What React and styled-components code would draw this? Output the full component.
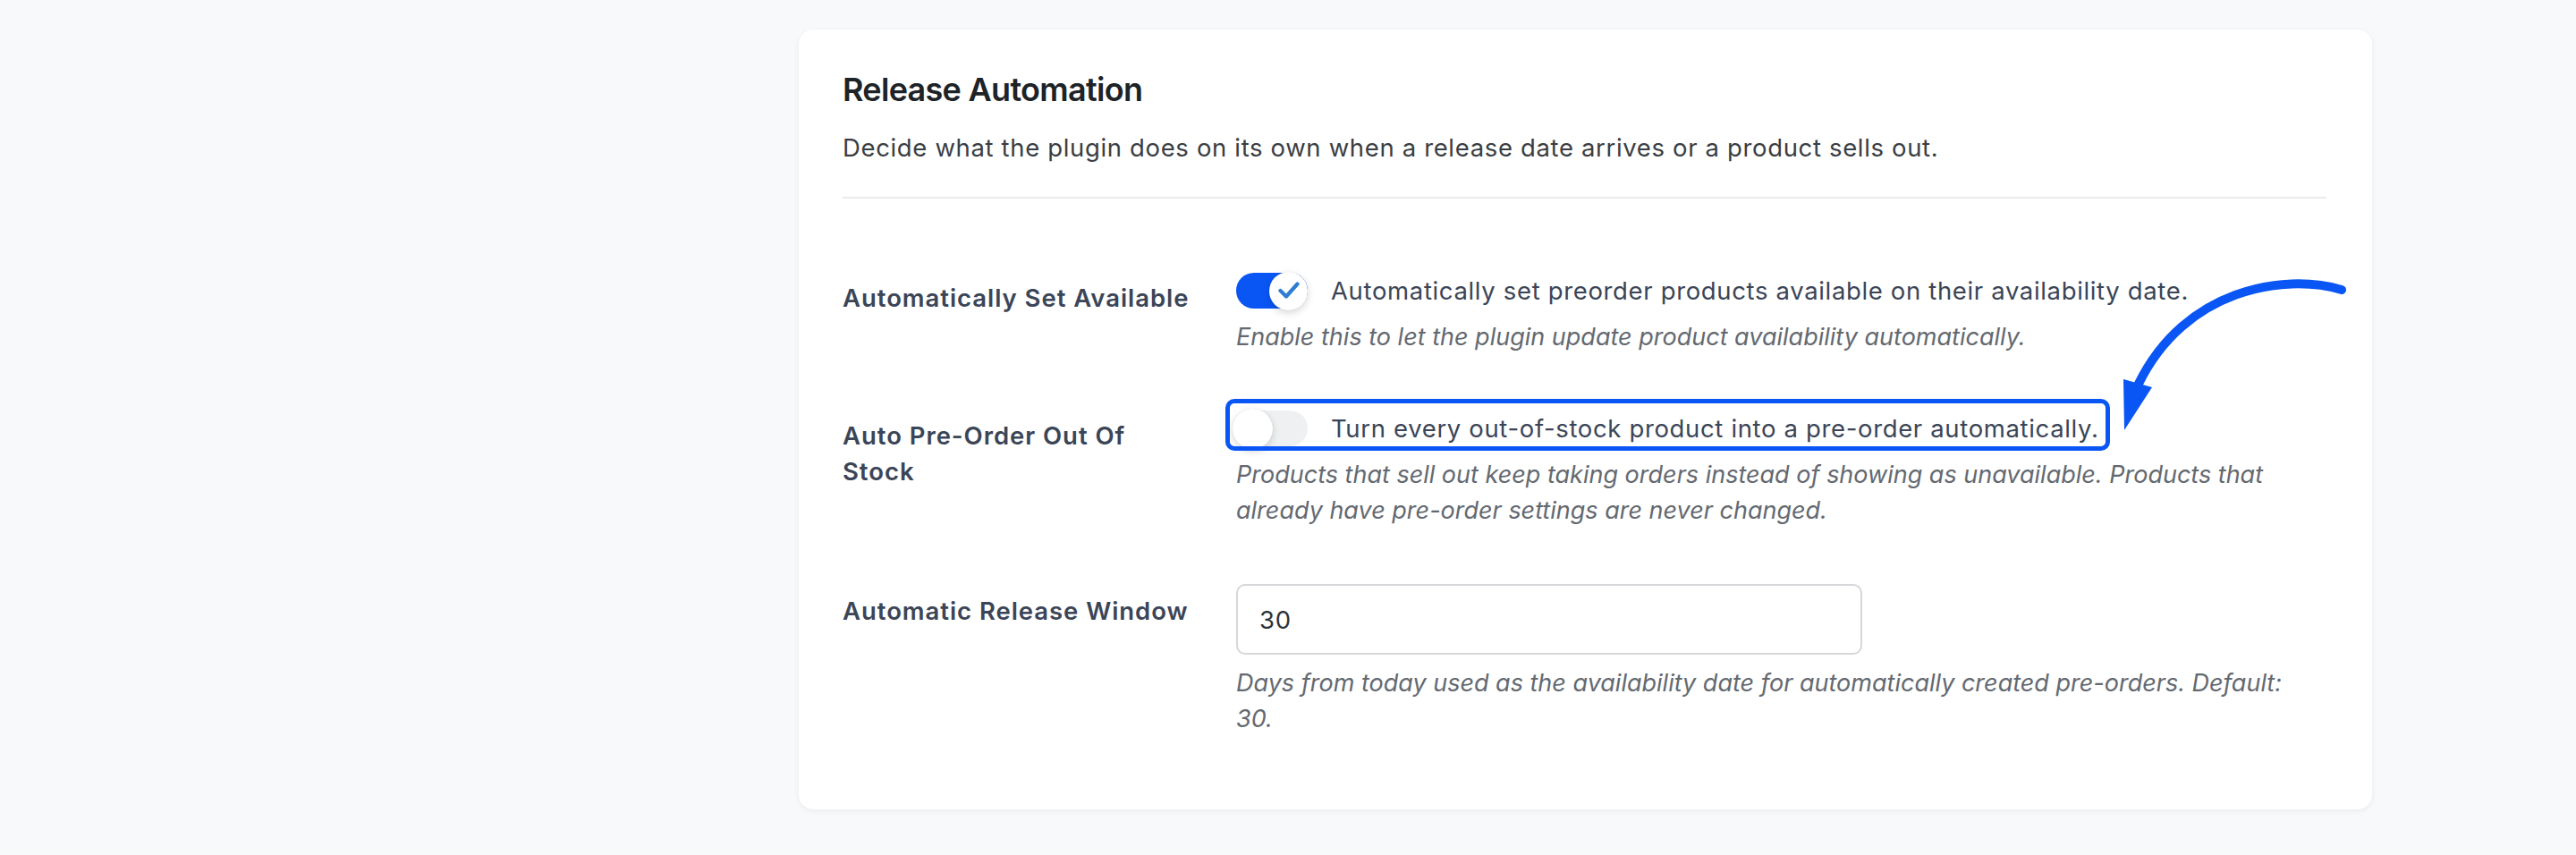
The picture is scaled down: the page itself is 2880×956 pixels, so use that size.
import React from "react";
import styled, { createGlobalStyle } from "styled-components";

const GlobalStyle = createGlobalStyle`
  html, body {
    margin: 0;
    padding: 0;
    background: #f8f9fb;
  }
  body {
    font-family: Inter, "Noto Sans", "Liberation Sans", sans-serif;
    -webkit-font-smoothing: antialiased;
  }
  * {
    box-sizing: border-box;
  }
`;

const settings = [
  {
    id: "auto-available",
    label: "Automatically Set Available",
    type: "toggle",
    on: true,
    text: "Automatically set preorder products available on their availability date.",
    help: "Enable this to let the plugin update product availability automatically.",
  },
  {
    id: "auto-out-of-stock",
    label: "Auto Pre-Order Out Of Stock",
    type: "toggle",
    on: false,
    highlight: true,
    text: "Turn every out-of-stock product into a pre-order automatically.",
    help: "Products that sell out keep taking orders instead of showing as unavailable. Products that already have pre-order settings are never changed.",
  },
  {
    id: "release-window",
    label: "Automatic Release Window",
    type: "number",
    value: "30",
    help: "Days from today used as the availability date for automatically created pre-orders. Default: 30.",
  },
];

const Toggle = ({ on }) => (
  <Track on={on ? 1 : 0}>
    <Knob on={on ? 1 : 0}>
      {on && (
        <svg width="24" height="20" viewBox="0 0 24 20">
          <path
            d="M2.5 10 L9 16.5 L21.5 2.5"
            fill="none"
            stroke="#2f7dd3"
            strokeWidth="4.2"
            strokeLinecap="round"
            strokeLinejoin="round"
          />
        </svg>
      )}
    </Knob>
  </Track>
);

const Arrow = () => (
  <ArrowSvg width="280" height="240" viewBox="0 0 280 240">
    <path
      d="M265 31 C 200 12, 90 30, 38 136"
      fill="none"
      stroke="#0a56f5"
      strokeWidth="10"
      strokeLinecap="round"
    />
    <polygon points="21,131 53,140 22,188" fill="#0a56f5" />
  </ArrowSvg>
);

const App = () => {
  return (
    <Page>
      <GlobalStyle />
      <Card>
        <CardHeader>
          <Title>Release Automation</Title>
          <Description>
            Decide what the plugin does on its own when a release date arrives
            or a product sells out.
          </Description>
        </CardHeader>

        <Rows>
          {settings.map((s) => (
            <Row key={s.id}>
              <Label offset={s.type === "number" ? 10 : 8}>{s.label}</Label>
              <Field>
                {s.type === "toggle" ? (
                  <ToggleLine highlight={s.highlight ? 1 : 0}>
                    <Toggle on={s.on} />
                    <ToggleText>{s.text}</ToggleText>
                  </ToggleLine>
                ) : (
                  <NumberInput type="text" defaultValue={s.value} />
                )}
                <Help>{s.help}</Help>
              </Field>
            </Row>
          ))}
        </Rows>

        <Arrow />
      </Card>
    </Page>
  );
};

const Page = styled.div`
  min-height: 956px;
  padding: 33px 0 0 893px;
`;

const Card = styled.div`
  position: relative;
  width: 1759px;
  background: #ffffff;
  border-radius: 16px;
  box-shadow: 0 2px 6px rgba(20, 30, 50, 0.06), 0 0 1px rgba(20, 30, 50, 0.05);
  padding: 45px 51px 45px 49px;
`;

const CardHeader = styled.div`
  padding-bottom: 35px;
  border-bottom: 2px solid #e9ebee;
`;

const Title = styled.h2`
  margin: 0;
  font-size: 36px;
  line-height: 44px;
  font-weight: 600;
  letter-spacing: -0.7px;
  color: #1d2327;
`;

const Description = styled.p`
  margin: 23px 0 0;
  font-size: 27.5px;
  line-height: 40px;
  letter-spacing: 0.65px;
  color: #3a3e44;
`;

const Rows = styled.div`
  display: flex;
  flex-direction: column;
  gap: 62px;
  padding: 83px 0 36px;
`;

const Row = styled.div`
  display: grid;
  grid-template-columns: 395px 1fr;
  column-gap: 45px;
  align-items: start;
`;

const Label = styled.div`
  padding-top: ${(p) => p.offset}px;
  font-size: 27.5px;
  line-height: 40px;
  font-weight: 600;
  letter-spacing: 0.95px;
  color: #3b4557;
`;

const Field = styled.div`
  display: flex;
  flex-direction: column;
  align-items: flex-start;
`;

const ToggleLine = styled.div`
  position: relative;
  display: inline-flex;
  align-items: center;
  gap: 26px;
  min-height: 40px;

  &::after {
    content: "";
    display: ${(p) => (p.highlight ? "block" : "none")};
    position: absolute;
    top: -13px;
    bottom: -5px;
    left: -12px;
    right: -12px;
    border: 5px solid #0a56f5;
    border-radius: 10px;
    pointer-events: none;
  }
`;

const Track = styled.span`
  position: relative;
  display: inline-flex;
  align-items: center;
  justify-content: ${(p) => (p.on ? "flex-end" : "flex-start")};
  flex: none;
  width: 80px;
  height: 40px;
  border-radius: 20px;
  background: ${(p) => (p.on ? "#0a56f5" : "#eef0f2")};
`;

const Knob = styled.span`
  display: flex;
  align-items: center;
  justify-content: center;
  width: ${(p) => (p.on ? 43 : 45)}px;
  height: ${(p) => (p.on ? 43 : 45)}px;
  margin-left: ${(p) => (p.on ? 0 : -4)}px;
  border-radius: 50%;
  background: #ffffff;
  box-shadow: 0 3px 8px rgba(0, 0, 0, 0.16), 0 0 1px rgba(0, 0, 0, 0.12);
`;

const ToggleText = styled.span`
  font-size: 27.5px;
  line-height: 40px;
  letter-spacing: 0.65px;
  color: #3b4557;
  white-space: nowrap;
`;

const NumberInput = styled.input`
  width: 700px;
  height: 79px;
  padding: 0 24px;
  border: 2px solid #d5d7da;
  border-radius: 10px;
  font-family: inherit;
  font-size: 27.5px;
  letter-spacing: 0.65px;
  color: #2c3338;
  background: #ffffff;
  outline: none;
`;

const Help = styled.p`
  margin: 12px 0 0;
  max-width: 1180px;
  font-size: 27px;
  line-height: 40px;
  font-style: italic;
  color: #646970;
`;

const ArrowSvg = styled.svg`
  position: absolute;
  left: 1460px;
  top: 260px;
  pointer-events: none;
`;

export default App;
